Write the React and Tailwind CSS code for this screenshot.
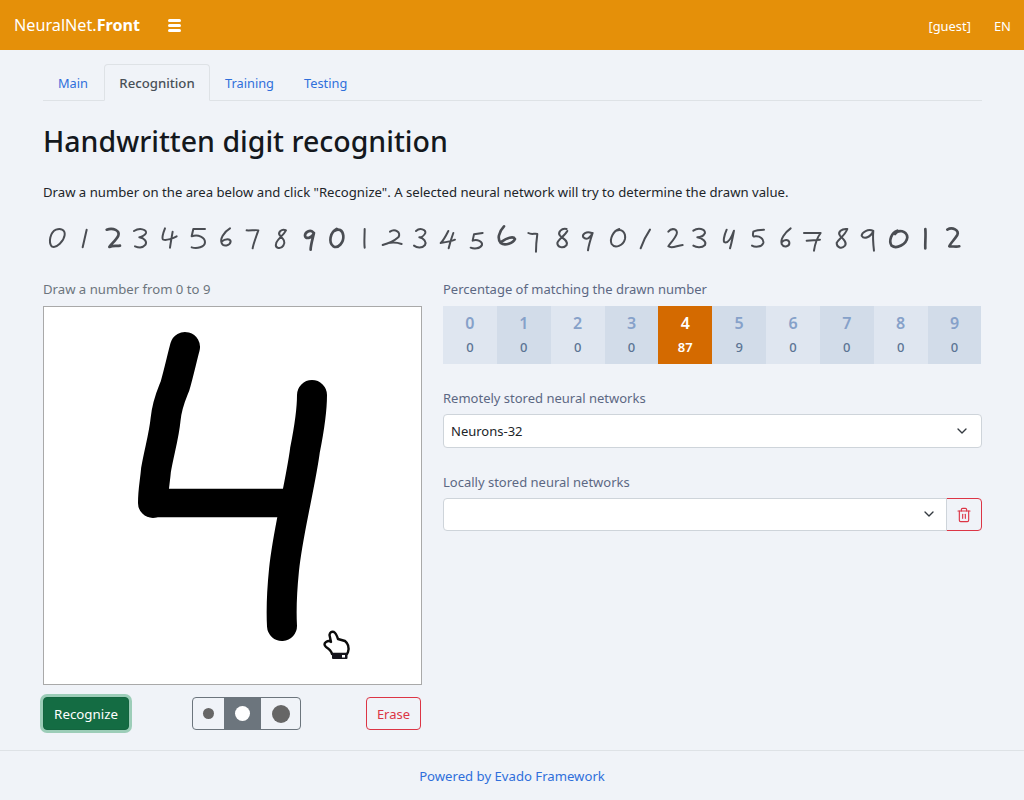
import { Trash2, ChevronDown } from 'lucide-react'

const tabs = ['Main', 'Recognition', 'Training', 'Testing']
const scores = [0, 0, 0, 0, 87, 9, 0, 0, 0, 0]

// handwritten sample strip, traced per third of the strip
const strokes = [
  {
    dx: 40,
    thin: ['M48 32C30 40 25 70 35 82C50 90 72 65 74 48C76 30 60 28 48 32', 'M140 32L128 85', 'M282 36C300 25 320 32 318 42C316 50 300 55 298 55C315 58 322 68 316 78C308 88 295 86 285 82', 'M375 28C368 45 365 60 370 62C380 65 400 58 410 52M398 38C395 55 392 72 390 86', 'M495 30L460 30L455 52C475 45 495 55 495 70C495 85 470 90 455 85', 'M570 28C550 40 540 60 545 72C550 85 570 80 572 68C572 58 555 58 545 68', 'M620 34C630 35 650 32 655 34C648 55 640 75 638 88', 'M738 34C725 28 712 40 720 50C730 60 738 68 730 80C722 92 705 88 708 75C710 62 730 50 738 34'],
    thick: ['M200 32C220 25 240 35 235 50C228 65 210 78 208 84C220 78 230 82 240 80', 'M820 40C810 30 795 40 795 50C797 60 815 60 822 42C818 60 812 78 812 92', 'M890 30C870 40 865 70 880 82C895 90 912 70 910 50C908 32 895 28 885 35'],
  },
  {
    dx: 350,
    thin: ['M44 30C44 50 42 70 44 86', 'M120 38C135 28 155 40 145 55C130 68 110 75 98 78C115 70 135 68 155 75', 'M198 36C210 25 228 32 226 42C222 52 212 55 208 55C222 58 230 68 225 78C215 90 200 86 192 80', 'M295 36C288 50 280 65 272 72C285 70 300 68 315 62M310 42C305 55 300 72 296 88', 'M398 42L372 46L368 65C382 60 398 68 396 78C390 90 372 90 362 86', 'M535 42C545 48 555 42 562 45C560 60 558 80 558 98', 'M650 30C635 26 622 40 630 50C640 60 655 65 650 78C640 90 622 85 622 72C625 60 645 50 652 36', 'M725 42C710 35 695 45 700 55C710 65 722 55 728 42C722 60 716 78 714 94', 'M808 30C790 35 778 60 785 75C795 90 820 80 825 60C828 40 815 28 800 35', 'M900 32C888 50 878 70 872 88'],
    thick: ['M462 22C445 40 442 60 452 72C465 82 490 72 495 60C490 50 470 58 455 68'],
  },
  {
    dx: 660,
    thin: ['M25 38C35 25 55 30 50 45C45 60 28 75 25 82C35 90 50 80 68 78', 'M100 35C115 25 135 30 135 42C130 52 118 55 112 55C128 58 140 68 135 78C125 88 108 85 100 80', 'M200 32C192 50 188 70 195 70C205 72 215 55 222 35C218 55 215 72 210 88', 'M312 32C295 32 285 35 280 38C278 48 278 55 285 52C300 50 312 60 310 72C305 85 285 85 276 80', 'M392 28C375 40 360 62 365 75C372 88 390 82 388 70C385 60 372 62 365 70', 'M432 42L482 42C472 55 465 75 462 95M440 65L480 62', 'M562 30C545 28 532 40 540 50C550 60 562 70 555 80C545 92 530 85 530 72C535 60 555 50 562 30', 'M640 36C625 28 605 40 605 50C612 62 632 55 640 36C638 55 640 78 642 95'],
    thick: ['M712 35C695 40 685 65 695 80C710 92 740 75 742 55C740 35 715 30 705 45', 'M796 30C798 50 795 70 796 88', 'M862 32C878 22 898 35 892 48C885 60 870 75 868 82C880 82 890 84 898 82'],
  },
]

function DigitStrip() {
  return (
    <svg width="938" height="38" viewBox="43 218 938 38" className="block">
      {strokes.map((part) => (
        <g key={part.dx} transform={`translate(${part.dx} 218) scale(0.3333)`} fill="none" stroke="#4a4d53" strokeLinecap="round" strokeLinejoin="round">
          {part.thin.map((d) => <path key={d} d={d} strokeWidth="6" />)}
          {part.thick.map((d) => <path key={d} d={d} strokeWidth="8" />)}
        </g>
      ))}
    </svg>
  )
}

function Canvas() {
  return (
    <div className="border border-[#a9a9a9] bg-white h-[379px]">
      <svg width="377" height="377" viewBox="44 307 377 377" className="block">
        <g fill="none" stroke="#000" strokeLinecap="round" strokeLinejoin="round">
          <path d="M185 347C182 358 179 372 175 386C171 396 167 404 165.500 420C164 436 159 452 156 470C155 482 153 490 153 503" strokeWidth="30" />
          <path d="M153 503L293 503" strokeWidth="28.500" />
          <path d="M312 395C312 412 309 430 305 450C303 466 298 490 294 510C290 530 286 550 284 570C282 590 281 608 282 626" strokeWidth="30" />
        </g>
        <path
          d="M331 642L329.500 635Q330 631 334 632Q336 633 338 639L345 641Q350 645 348 652L347 654L332 654Q331 650 326 647Q323 644 326 642Q329 640 331 642Z"
          fill="#fff"
          stroke="#0b0b0b"
          strokeWidth="2.400"
          strokeLinejoin="round"
        />
        <rect x="332" y="653" width="15.500" height="6" rx="1" fill="#14141c" />
        <rect x="342" y="655" width="3" height="2.500" fill="#fff" />
      </svg>
    </div>
  )
}

export default function App() {
  return (
    <div className="min-h-[800px] flex flex-col bg-[#f0f3f8] font-['Noto_Sans',sans-serif] text-[13px] text-[#212529]">
      <header className="h-[50px] bg-[#e59009] flex items-center pl-[14px] pr-[13px] text-white">
        <div className="text-[16.200px] w-[154px] pt-px">NeuralNet.<span className="font-bold">Front</span></div>
        <div className="flex flex-col gap-[2px] w-[13px]">
          <span className="h-[3px] bg-white rounded-sm"></span>
          <span className="h-[3px] bg-white rounded-sm"></span>
          <span className="h-[3px] bg-white rounded-sm"></span>
        </div>
        <div className="ml-auto text-[12.900px] pt-[3px]">[guest]</div>
        <div className="ml-[23px] text-[13px] pt-[3px]">EN</div>
      </header>

      <main className="flex-1 pl-[43px] pr-[42px] pt-[14px]">
        <nav className="flex border-b border-[#dee2e6] h-[37px]">
          {tabs.map((tab) =>
            tab === 'Recognition' ? (
              <div key={tab} className="h-[37px] w-[106px] pt-[2px] flex items-center justify-center border border-[#dee2e6] border-b-[#f0f3f8] rounded-t-[4px] text-[13.200px] font-medium text-[#495057]">
                {tab}
              </div>
            ) : (
              <a key={tab} className="h-[36px] pt-[3px] px-[15px] first:w-[61px] flex items-center text-[12.800px] text-[#2f6fdb]">{tab}</a>
            )
          )}
        </nav>

        <h1 className="mt-[20px] text-[28.500px] leading-[40px] font-medium text-[#14181d]">Handwritten digit recognition</h1>
        <p className="mt-[21px] text-[13.150px] leading-[20px]">Draw a number on the area below and click "Recognize". A selected neural network will try to determine the drawn value.</p>

        <div className="mt-[17px]"><DigitStrip /></div>

        <div className="mt-[23px] flex gap-[21px]">
          <div className="w-[379px] shrink-0">
            <label className="block text-[13.150px] leading-[18px] text-[#6c757d] mb-[8px]">Draw a number from 0 to 9</label>
            <Canvas />
            <div className="mt-[12px] w-[378px] flex items-center">
              <button className="h-[33px] w-[86px] pt-[2px] bg-[#146c43] text-white text-[13.300px] rounded-[4px] border border-[#13653f] ring-[3px] ring-[#9ccdb8]">Recognize</button>
              <div className="ml-[63px] flex h-[33px] w-[109px] border border-[#6c757d] rounded-[4px] overflow-hidden">
                <div className="w-[31px] flex items-center justify-center">
                  <span className="w-[11px] h-[11px] rounded-full bg-[#666]"></span>
                </div>
                <div className="w-[37px] flex items-center justify-center bg-[#6c757d]">
                  <span className="w-[15px] h-[15px] rounded-full bg-white"></span>
                </div>
                <div className="flex-1 flex items-center justify-center">
                  <span className="w-[18px] h-[18px] rounded-full bg-[#666]"></span>
                </div>
              </div>
              <button className="ml-auto h-[33px] w-[55px] pt-[2px] border border-[#dc3545] text-[#dc3545] text-[13px] rounded-[4px]">Erase</button>
            </div>
          </div>

          <div className="flex-1">
            <label className="block text-[13px] leading-[18px] text-[#5c6883] mb-[8px]">Percentage of matching the drawn number</label>
            <div className="flex w-[538.500px] h-[58px]">
              {scores.map((score, i) => (
                <div
                  key={i}
                  className={`flex-1 flex flex-col items-center pt-[6px] ${i === 4 ? 'bg-[#d46a00] text-white' : i % 2 === 0 ? 'bg-[#dfe6f0]' : 'bg-[#d2dce9]'}`}
                >
                  <span className={`text-[16px] leading-[22px] font-semibold ${i === 4 ? 'text-white' : 'text-[#86a1c9]'}`}>{i}</span>
                  <span className={`mt-[2px] text-[13px] leading-[22px] font-medium ${i === 4 ? 'text-white font-semibold' : 'text-[#5b7494]'}`}>{score}</span>
                </div>
              ))}
            </div>

            <div className="mt-[25px]">
              <label className="block text-[13px] leading-[18px] text-[#5c6883] mb-[7px]">Remotely stored neural networks</label>
              <div className="relative">
                <select className="appearance-none w-full h-[34px] bg-white border border-[#ced4da] rounded-[4px] pl-[7px] pt-[2px] text-[13px] text-[#212529] outline-none" defaultValue="Neurons-32">
                  <option>Neurons-32</option>
                </select>
                <ChevronDown className="absolute right-[12px] top-[9px] w-[16px] h-[16px] text-[#343a40] pointer-events-none" strokeWidth={2} />
              </div>
            </div>

            <div className="mt-[25px]">
              <label className="block text-[13px] leading-[18px] text-[#5c6883] mb-[7px]">Locally stored neural networks</label>
              <div className="flex h-[33px]">
                <div className="relative flex-1">
                  <select className="appearance-none w-full h-[33px] bg-white border border-[#ced4da] rounded-l-[4px] outline-none"></select>
                  <ChevronDown className="absolute right-[10px] top-[8px] w-[16px] h-[16px] text-[#343a40] pointer-events-none" strokeWidth={2} />
                </div>
                <button className="w-[36px] -ml-px flex items-center justify-center border border-[#dc3545] rounded-r-[4px]">
                  <Trash2 className="w-[16px] h-[16px] text-[#dc3545]" strokeWidth={1.700} />
                </button>
              </div>
            </div>
          </div>
        </div>
      </main>

      <footer className="h-[50px] pt-[2px] border-t border-[#dee2e6] flex items-center justify-center text-[#2f6fdb] text-[13.150px]">
        Powered by Evado Framework
      </footer>
    </div>
  )
}
